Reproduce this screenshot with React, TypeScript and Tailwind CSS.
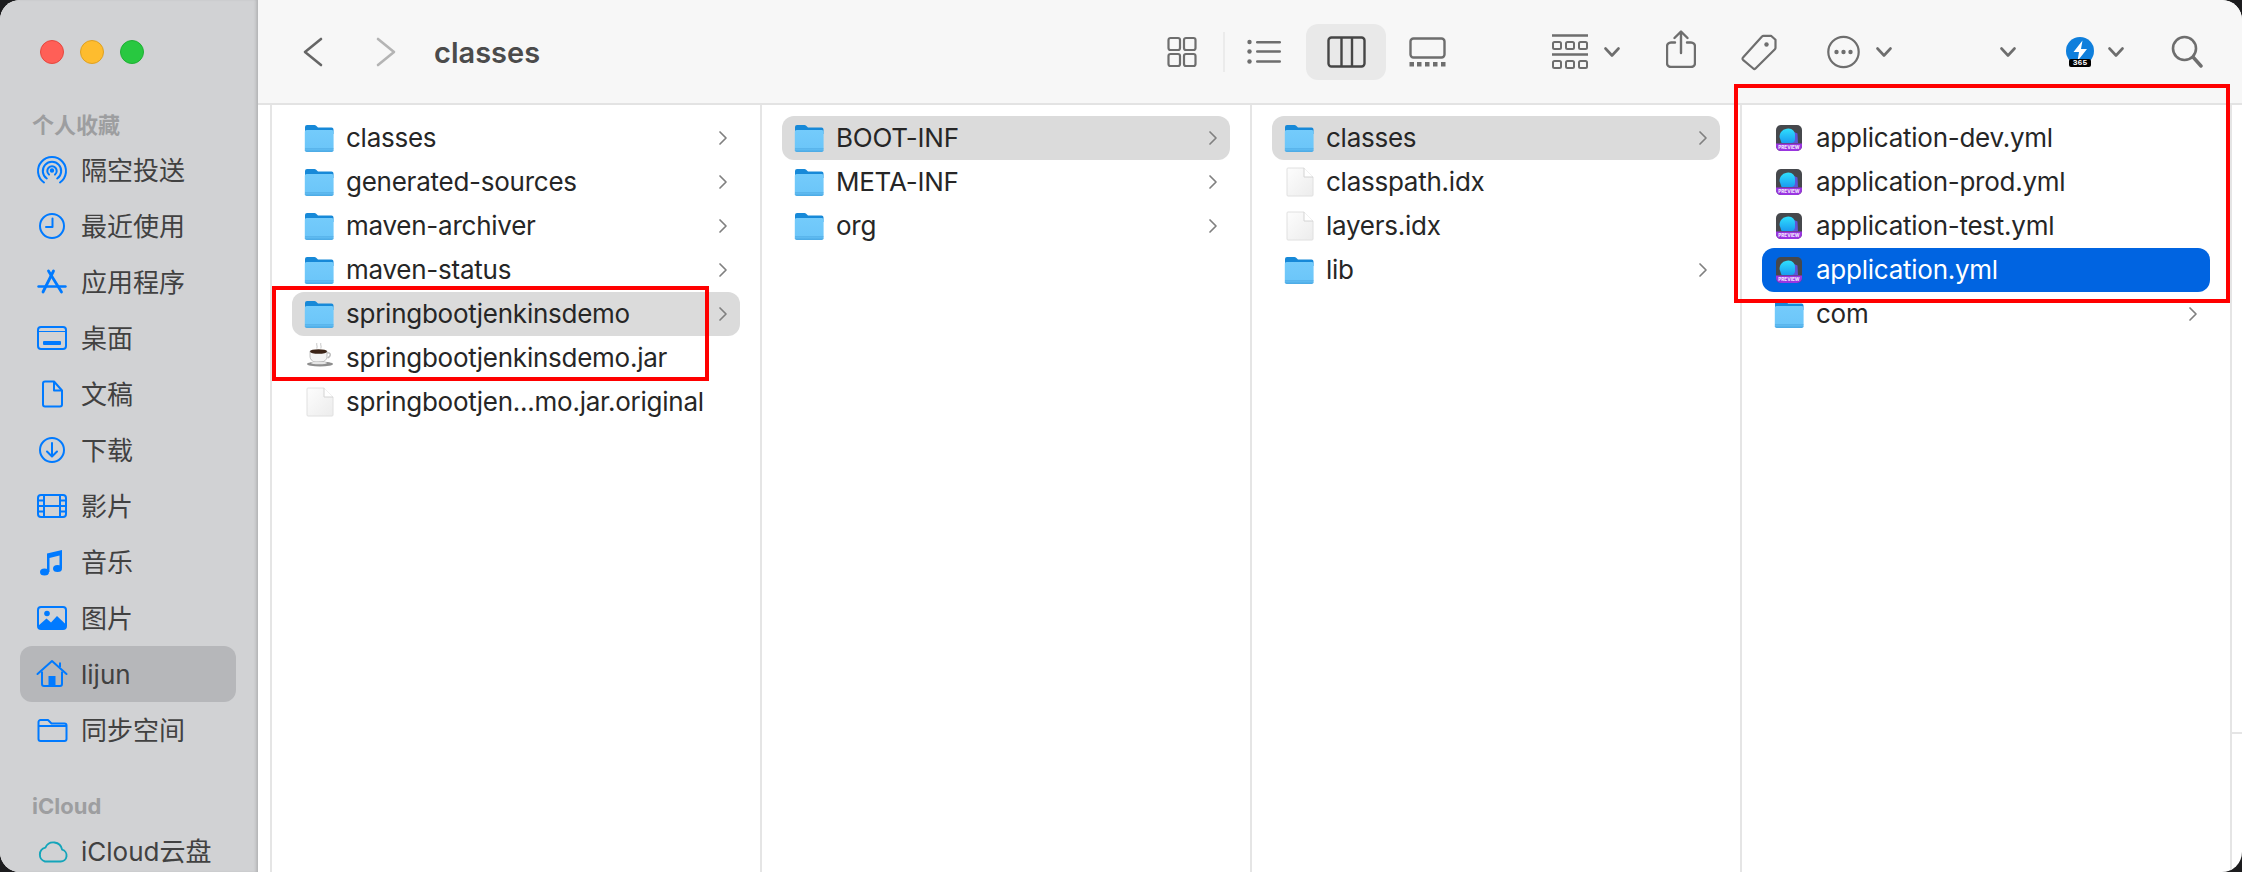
import type { ReactNode } from "react";

const blue = "#007aff";

function Ico({ children, w = 32, h = 32, className = "" }: { children: ReactNode; w?: number; h?: number; className?: string }) {
  return (
    <svg width={w} height={h} viewBox={`0 0 ${w} ${h}`} fill="none" className={`shrink-0 ${className}`}>
      {children}
    </svg>
  );
}

// sidebar glyphs, all drawn in a 32x32 box
const sideIcons: Record<string, ReactNode> = {
  airdrop: (
    <g stroke={blue} strokeWidth="2" strokeLinecap="round">
      <path d="M8 28.5A14 14 0 1 1 24 28.5" />
      <path d="M10.8 24.5A9.2 9.2 0 1 1 21.2 24.5" />
      <path d="M13 20.6A4.7 4.7 0 1 1 19 20.6" />
      <circle cx="16" cy="16.5" r="1.2" fill={blue} />
    </g>
  ),
  clock: (
    <g stroke={blue} strokeWidth="2" strokeLinecap="round" strokeLinejoin="round">
      <circle cx="16" cy="16" r="12" />
      <path d="M16.5 8.5V17H10" />
    </g>
  ),
  apps: (
    <g stroke={blue} strokeWidth="2.8" strokeLinecap="round">
      <path d="M17.5 5 7 26" />
      <path d="M12.5 5 25.5 26" />
      <path d="M2.5 20.5H29.5" strokeWidth="2.4" />
    </g>
  ),
  desktop: (
    <g>
      <rect x="2" y="5" width="28" height="22" rx="3" stroke={blue} strokeWidth="2" />
      <path d="M2 9.5H30" stroke={blue} strokeWidth="1" />
      <rect x="7" y="19" width="18" height="4" rx="1" fill={blue} />
    </g>
  ),
  doc: (
    <g stroke={blue} strokeWidth="2" strokeLinejoin="round">
      <path d="M7 5.5a2 2 0 0 1 2-2h9l8 9v14a2 2 0 0 1-2 2H9a2 2 0 0 1-2-2Z" />
      <path d="M18 3.5V12.5H26" />
    </g>
  ),
  download: (
    <g stroke={blue} strokeWidth="2" strokeLinecap="round" strokeLinejoin="round">
      <circle cx="16" cy="16" r="12" />
      <path d="M16 9V22M11 17.5 16 22.5 21 17.5" />
    </g>
  ),
  film: (
    <g>
      <rect x="2" y="5" width="28" height="22" rx="3" stroke={blue} strokeWidth="2" />
      <path d="M8 5V27M24 5V27M8 16H24" stroke={blue} strokeWidth="2" />
      <path d="M2 10.5H8M2 16H8M2 21.5H8M24 10.5H30M24 16H30M24 21.5H30" stroke={blue} strokeWidth="2" />
    </g>
  ),
  music: (
    <g fill={blue}>
      <path d="M11 7.5 26 4V22H23.5V9.5L13.5 12V26H11Z" />
      <ellipse cx="8.5" cy="26" rx="4.5" ry="3.6" />
      <ellipse cx="21.5" cy="22.5" rx="4.5" ry="3.6" />
    </g>
  ),
  photo: (
    <g>
      <rect x="2" y="5" width="28" height="22" rx="3" stroke={blue} strokeWidth="2" />
      <circle cx="11" cy="11.5" r="2.8" fill={blue} />
      <path d="M2 24 10.5 16.5 15 20.5 21 14 30 22.5V25a2 2 0 0 1-2 2H4a2 2 0 0 1-2-2Z" fill={blue} />
    </g>
  ),
  home: (
    <g>
      <path d="M1.5 16 16 3 30.5 16" stroke={blue} strokeWidth="2" strokeLinecap="round" strokeLinejoin="round" />
      <path d="M6 13.5V26a2 2 0 0 0 2 2H24a2 2 0 0 0 2-2V13.5" stroke={blue} strokeWidth="2" />
      <path d="M24 4.5V9" stroke={blue} strokeWidth="2" />
      <rect x="12.5" y="18" width="7" height="10" fill={blue} />
    </g>
  ),
  folder: (
    <path
      d="M2.5 8a2 2 0 0 1 2-2h7.5l3.5 3.5h13a2 2 0 0 1 2 2V25a2 2 0 0 1-2 2h-24a2 2 0 0 1-2-2ZM2.5 12H29.5"
      stroke={blue}
      strokeWidth="2"
      strokeLinejoin="round"
    />
  ),
  cloud: (
    <path
      d="M9 26.5H24.5a6 6 0 0 0 1.6-11.8A8.8 8.8 0 0 0 9.4 12.6 7.2 7.2 0 0 0 9 26.5Z"
      stroke="#14a5ba"
      strokeWidth="1.9"
      strokeLinejoin="round"
    />
  ),
};

function SideItem({ icon, label, active }: { icon: string; label: string; active?: boolean }) {
  return (
    <div className={`mx-5 flex h-14 w-[216px] shrink-0 items-center rounded-xl pl-4 ${active ? "bg-[#b6b7ba]" : ""}`}>
      <svg width="32" height="32" viewBox="0 0 32 32" fill="none" className="shrink-0">
        {sideIcons[icon]}
      </svg>
      <span className="mt-0.5 ml-[13px] text-[26px] leading-8 whitespace-nowrap text-[#414141]">{label}</span>
    </div>
  );
}

function Sidebar() {
  return (
    <aside className="flex h-full w-[258px] shrink-0 flex-col bg-[#d1d2d4] shadow-[inset_-3px_0_3px_-1px_rgba(0,0,0,0.14)]">
      <div className="flex h-[108px] shrink-0 gap-4 pt-10 pl-10">
        <div className="h-6 w-6 rounded-full border border-[#e5483f] bg-[#ff5f57]" />
        <div className="h-6 w-6 rounded-full border border-[#dea123] bg-[#febc2e]" />
        <div className="h-6 w-6 rounded-full border border-[#1fb034] bg-[#28c840]" />
      </div>
      <div className="flex h-[34px] shrink-0 items-center pl-8 text-[22px] font-bold text-[#9d9ea0]">个人收藏</div>
      <SideItem icon="airdrop" label="隔空投送" />
      <SideItem icon="clock" label="最近使用" />
      <SideItem icon="apps" label="应用程序" />
      <SideItem icon="desktop" label="桌面" />
      <SideItem icon="doc" label="文稿" />
      <SideItem icon="download" label="下载" />
      <SideItem icon="film" label="影片" />
      <SideItem icon="music" label="音乐" />
      <SideItem icon="photo" label="图片" />
      <SideItem icon="home" label="lijun" active />
      <SideItem icon="folder" label="同步空间" />
      <div className="mt-[31px] flex h-[34px] shrink-0 items-center pl-8 text-[22px] font-bold text-[#9d9ea0]">iCloud</div>
      <SideItem icon="cloud" label="iCloud云盘" />
    </aside>
  );
}

function Caret({ className = "" }: { className?: string }) {
  return (
    <svg width="16" height="12" viewBox="0 0 16 12" fill="none" className={`shrink-0 ${className}`}>
      <path d="M1.5 2.5 8 9.5 14.5 2.5" stroke="#6e6e6e" strokeWidth="2.6" strokeLinecap="round" strokeLinejoin="round" />
    </svg>
  );
}

function Toolbar() {
  const c = "#6e6e6e";
  return (
    <div className="flex h-[105px] shrink-0 items-center border-b-2 border-[#e3e3e3] bg-[#f7f7f7]">
      <svg width="20" height="30" viewBox="0 0 20 30" fill="none" className="ml-[45px] shrink-0">
        <path d="M18 2 2 15 18 28" stroke="#666666" strokeWidth="2.6" strokeLinecap="round" strokeLinejoin="round" />
      </svg>
      <svg width="20" height="30" viewBox="0 0 20 30" fill="none" className="ml-[53px] shrink-0">
        <path d="M2 2 18 15 2 28" stroke="#b4b4b4" strokeWidth="2.6" strokeLinecap="round" strokeLinejoin="round" />
      </svg>
      <span className="mt-0.5 ml-[38px] w-[105px] shrink-0 text-[29px] font-semibold whitespace-nowrap text-[#4b4b4b]">classes</span>

      {/* view switcher */}
      <Ico w={30} h={32} className="ml-[628px]">
        <g stroke={c} strokeWidth="2.2">
          <rect x="1.5" y="2" width="11.5" height="12" rx="2" />
          <rect x="17" y="2" width="11.5" height="12" rx="2" />
          <rect x="1.5" y="18" width="11.5" height="12" rx="2" />
          <rect x="17" y="18" width="11.5" height="12" rx="2" />
        </g>
      </Ico>
      <div className="ml-[26px] h-10 w-0.5 shrink-0 bg-[#ebebeb]" />
      <Ico w={34} h={25} className="ml-[22px]">
        <g fill={c}>
          <circle cx="2.5" cy="3" r="2.2" />
          <circle cx="2.5" cy="12.5" r="2.2" />
          <circle cx="2.5" cy="22.5" r="2.2" />
          <rect x="9" y="2" width="25" height="2.4" rx="1.2" />
          <rect x="9" y="11.3" width="25" height="2.4" rx="1.2" />
          <rect x="9" y="21.3" width="25" height="2.4" rx="1.2" />
        </g>
      </Ico>
      <div className="ml-[25px] flex h-14 w-20 shrink-0 items-center justify-center rounded-xl bg-[#e9e9e9]">
        <Ico w={39} h={32}>
          <g stroke="#464646" strokeWidth="2.4">
            <rect x="1.5" y="1.5" width="36" height="29" rx="3" />
            <path d="M14.5 1.5V30.5M25 1.5V30.5" />
          </g>
        </Ico>
      </div>
      <Ico w={37} h={30} className="ml-[23px]">
        <rect x="1.5" y="1.5" width="34" height="19" rx="3" stroke={c} strokeWidth="2.4" />
        <g fill={c}>
          <rect x="0.5" y="25" width="4.5" height="4.5" />
          <rect x="8" y="25" width="4.5" height="4.5" />
          <rect x="16" y="25" width="4.5" height="4.5" />
          <rect x="24" y="25" width="4.5" height="4.5" />
          <rect x="32" y="25" width="4.5" height="4.5" />
        </g>
      </Ico>

      {/* group by */}
      <Ico w={36} h={36} className="ml-[106px]">
        <g stroke={c} strokeWidth="2">
          <path d="M0 1.5H36M0 20.5H36" strokeWidth="2.4" />
          <rect x="1" y="8" width="8" height="7" rx="1.5" />
          <rect x="14" y="8" width="8" height="7" rx="1.5" />
          <rect x="27" y="8" width="8" height="7" rx="1.5" />
          <rect x="1" y="27" width="8" height="7" rx="1.5" />
          <rect x="14" y="27" width="8" height="7" rx="1.5" />
          <rect x="27" y="27" width="8" height="7" rx="1.5" />
        </g>
      </Ico>
      <Caret className="ml-4" />

      {/* share */}
      <Ico w={30} h={38} className="mb-[5px] ml-[46px]">
        <g stroke={c} strokeWidth="2.4" strokeLinecap="round" strokeLinejoin="round">
          <path d="M15 23V2M8.5 8 15 1.5 21.5 8" />
          <path d="M9 12.5H5a4 4 0 0 0-4 4V33a4 4 0 0 0 4 4H25a4 4 0 0 0 4-4V16.5a4 4 0 0 0-4-4H21" />
        </g>
      </Ico>
      {/* tag */}
      <Ico w={36} h={38} className="ml-[45px]">
        <path
          d="M2 24.5 21 3.5a2 2 0 0 1 1.5-.7h7.5l4.5 4v8a2 2 0 0 1-.6 1.4L14.5 35.5a1.6 1.6 0 0 1-2.2 0L2 26.8a1.6 1.6 0 0 1 0-2.3Z"
          stroke={c}
          strokeWidth="2.2"
          strokeLinejoin="round"
        />
        <circle cx="25.5" cy="11.5" r="2.2" fill={c} />
      </Ico>
      {/* more */}
      <Ico w={33} h={34} className="ml-[50px]">
        <circle cx="16.5" cy="17" r="15.2" stroke={c} strokeWidth="2.2" />
        <g fill={c}>
          <circle cx="9.5" cy="17" r="2.2" />
          <circle cx="16.5" cy="17" r="2.2" />
          <circle cx="23.5" cy="17" r="2.2" />
        </g>
      </Ico>
      <Caret className="ml-4" />
      <Caret className="ml-[108px]" />

      {/* menu-bar helper icon with badge */}
      <div className="relative ml-[50px] h-[30px] w-7 shrink-0">
        <svg width="28" height="28" viewBox="0 0 28 28" className="absolute top-0 left-0">
          <circle cx="14" cy="14" r="14" fill="#0f7fdc" />
          <path d="M16.5 3.5 7.5 15h5.5l-1.5 9L21 12h-6Z" fill="#ffffff" />
        </svg>
        <span className="absolute top-[22px] left-[3px] flex h-2 w-[22px] items-center justify-center rounded-[2px] bg-black font-['Liberation_Mono',monospace] text-[8px] leading-none font-bold text-white">
          365
        </span>
      </div>
      <Caret className="ml-[14px]" />

      {/* search */}
      <Ico w={32} h={34} className="ml-[47px]">
        <circle cx="13.5" cy="13.5" r="11.5" stroke={c} strokeWidth="2.6" />
        <path d="M22 22 30 31" stroke={c} strokeWidth="3.4" strokeLinecap="round" />
      </Ico>
    </div>
  );
}

function FolderIcon() {
  return (
    <svg width="30" height="29" viewBox="0 0 30 29" fill="none">
      <defs>
        <linearGradient id="fbody" x1="0" y1="0" x2="0" y2="1">
          <stop offset="0" stopColor="#74cbfb" />
          <stop offset="0.8" stopColor="#6cc6f9" />
          <stop offset="1" stopColor="#4aa9e4" />
        </linearGradient>
      </defs>
      <path d="M1 3a2 2 0 0 1 2-2h7.5a2 2 0 0 1 1.4.6L14 3.5h13.5a2 2 0 0 1 2 2V10H1Z" fill="#1789d8" />
      <rect x="0.8" y="6" width="28.8" height="22" rx="1.8" fill="url(#fbody)" />
      <path d="M1 24.5H29.4" stroke="#58b2ea" strokeWidth="0.8" />
    </svg>
  );
}

function FileIcon() {
  return (
    <svg width="30" height="30" viewBox="0 0 30 30" fill="none">
      <defs>
        <linearGradient id="fpage" x1="0" y1="0" x2="1" y2="1">
          <stop offset="0" stopColor="#fdfdfd" />
          <stop offset="1" stopColor="#ececec" />
        </linearGradient>
      </defs>
      <path d="M3 2a1 1 0 0 1 1-1H20l9 9V28a1 1 0 0 1-1 1H4a1 1 0 0 1-1-1Z" fill="url(#fpage)" stroke="#e0e0e0" strokeWidth="1" />
      <path d="M20 1V10H29" fill="#ffffff" stroke="#d4d4d4" strokeWidth="1" />
    </svg>
  );
}

function JarIcon() {
  return (
    <svg width="30" height="30" viewBox="0 0 30 30" fill="none">
      <path d="M13 0c-1.5 2 1.5 3-.5 5.5M17 0c-1.5 2 1.5 3-.5 5.5" stroke="#d6d6d6" strokeWidth="1.3" />
      <path d="M6 8h17v5c0 4-3 6.5-8.5 6.5S6 17 6 13Z" fill="#f4f4f4" stroke="#b0b0b0" strokeWidth="0.8" />
      <ellipse cx="14.5" cy="8.5" rx="8.500" ry="2.3" fill="#3b2417" />
      <path d="M23 10c4-1 4.5 3 .5 5" stroke="#bdbdbd" strokeWidth="1.5" />
      <ellipse cx="16" cy="21" rx="13" ry="2.6" fill="#8e8e8e" />
      <ellipse cx="15" cy="20" rx="8" ry="1.3" fill="#e6e6e6" />
    </svg>
  );
}

function PreviewIcon() {
  return (
    <svg width="30" height="30" viewBox="0 0 30 30" fill="none">
      <defs>
        <linearGradient id="pcyan" x1="0" y1="0" x2="0" y2="1">
          <stop offset="0" stopColor="#2fe0fd" />
          <stop offset="1" stopColor="#1a9cf0" />
        </linearGradient>
      </defs>
      <rect x="2" y="2" width="26" height="26" rx="5" fill="#46484c" />
      <path d="M14 6.5 23.5 10.5 24 20H12Z" fill="#5e55d8" />
      <path d="M5.5 14c0-5 4-8.5 9-8.5 4 0 6.500 3 6.500 6.500v4c0 2-1 4-4 4H7.500Z" fill="url(#pcyan)" />
      <path d="M2 20.5H28V23a5 5 0 0 1-5 5H7a5 5 0 0 1-5-5Z" fill="#9a35e0" />
      <text x="15" y="26.2" textAnchor="middle" fontSize="4.6" fontWeight="800" fill="#f0e2ff" fontFamily="Inter, sans-serif">
        PREVIEW
      </text>
    </svg>
  );
}

type Kind = "folder" | "file" | "jar" | "preview";

function Row({ name, kind, sel }: { name: string; kind: Kind; sel?: "gray" | "blue" }) {
  const bg = sel === "gray" ? "bg-[#dbdbdb]" : sel === "blue" ? "bg-[#0064e1]" : "";
  return (
    <div className={`mx-5 flex h-11 w-[448px] items-center rounded-xl pl-3 ${bg}`}>
      <div className="flex h-[30px] w-[30px] shrink-0 items-center justify-center">
        {kind === "folder" && <FolderIcon />}
        {kind === "file" && <FileIcon />}
        {kind === "jar" && <JarIcon />}
        {kind === "preview" && <PreviewIcon />}
      </div>
      <span
        className={`mb-0.5 ml-3 flex-1 text-[26px] tracking-[-0.25px] whitespace-nowrap ${sel === "blue" ? "text-white" : "text-[#262626]"}`}
      >
        {name}
      </span>
      {kind === "folder" && (
        <svg width="10" height="16" viewBox="0 0 10 16" fill="none" className="mr-3">
          <path d="M2 2 8 8 2 14" stroke="#808080" strokeWidth="1.7" strokeLinecap="round" strokeLinejoin="round" />
        </svg>
      )}
    </div>
  );
}

function Column({ rows }: { rows: { name: string; kind: Kind; sel?: "gray" | "blue" }[] }) {
  return (
    <div className="h-full w-[490px] shrink-0 border-l-2 border-[#e5e5e5] pt-[11px]">
      {rows.map((r) => (
        <Row key={r.name} {...r} />
      ))}
    </div>
  );
}

export default function App() {
  return (
    <div className="h-[872px] w-[2242px] overflow-hidden bg-[#1c1c1e] font-['Inter','Noto_Sans_CJK_SC',sans-serif]">
      <div className="relative flex h-[872px] w-[2242px] overflow-hidden rounded-[20px] bg-white">
        <Sidebar />
        <div className="flex min-w-0 flex-1 flex-col">
          <Toolbar />
          <div className="flex min-h-0 flex-1 pl-3">
            <Column
              rows={[
                { name: "classes", kind: "folder" },
                { name: "generated-sources", kind: "folder" },
                { name: "maven-archiver", kind: "folder" },
                { name: "maven-status", kind: "folder" },
                { name: "springbootjenkinsdemo", kind: "folder", sel: "gray" },
                { name: "springbootjenkinsdemo.jar", kind: "jar" },
                { name: "springbootjen...mo.jar.original", kind: "file" },
              ]}
            />
            <Column
              rows={[
                { name: "BOOT-INF", kind: "folder", sel: "gray" },
                { name: "META-INF", kind: "folder" },
                { name: "org", kind: "folder" },
              ]}
            />
            <Column
              rows={[
                { name: "classes", kind: "folder", sel: "gray" },
                { name: "classpath.idx", kind: "file" },
                { name: "layers.idx", kind: "file" },
                { name: "lib", kind: "folder" },
              ]}
            />
            <Column
              rows={[
                { name: "application-dev.yml", kind: "preview" },
                { name: "application-prod.yml", kind: "preview" },
                { name: "application-test.yml", kind: "preview" },
                { name: "application.yml", kind: "preview", sel: "blue" },
                { name: "com", kind: "folder" },
              ]}
            />
            <div className="h-full flex-1 border-l-2 border-[#e5e5e5]">
              <div className="mt-[627px] h-0.5 bg-[#e5e5e5]" />
            </div>
          </div>
        </div>

        {/* red annotation boxes laid over the window */}
        <div className="absolute top-[286px] left-[272px] h-[95px] w-[437px] border-4 border-[#ff0000]" />
        <div className="absolute top-[84px] left-[1734px] h-[219px] w-[496px] border-4 border-[#ff0000]" />
      </div>
    </div>
  );
}
